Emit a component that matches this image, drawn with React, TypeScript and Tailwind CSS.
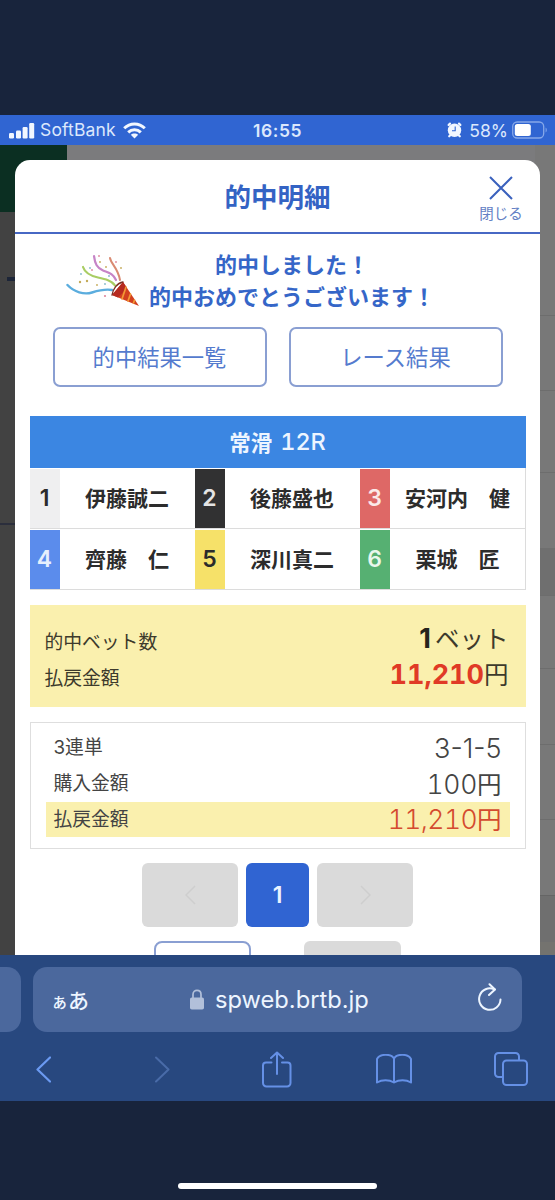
import React from 'react';

const jp = "font-['Noto_Sans_CJK_JP',sans-serif]";
const latin = "font-['Inter','Noto_Sans_CJK_JP',sans-serif]";

const racers = [
  { no: 1, name: '伊藤誠二', color: 'bg-[#efeff0] text-[#2b2b2b]' },
  { no: 2, name: '後藤盛也', color: 'bg-[#313132] text-[#e4e4e4]' },
  { no: 3, name: '安河内　健', color: 'bg-[#de6866] text-[#fbe9e8]' },
  { no: 4, name: '齊藤　仁', color: 'bg-[#5b8cec] text-[#e6effd]' },
  { no: 5, name: '深川真二', color: 'bg-[#f6e169] text-[#2b2b2b]' },
  { no: 6, name: '栗城　匠', color: 'bg-[#56b072] text-[#e9f7ec]' },
];

const StatusBar: React.FC = () => (
  <div className={`${latin} grid h-[30px] shrink-0 grid-cols-[1fr_auto_1fr] items-center bg-[#3065d2] text-[#dce8fc]`}>
    <div className="flex items-center pl-[9px]">
      <svg width="26" height="17" viewBox="0 0 26 17" fill="#f2f7ff">
        <rect x="0" y="11" width="5" height="5.5" rx="1.2" />
        <rect x="7" y="8.5" width="5" height="8" rx="1.2" />
        <rect x="13.6" y="5" width="5" height="11.5" rx="1.2" />
        <rect x="20.2" y="1" width="5" height="15.5" rx="1.2" />
      </svg>
      <span className="ml-[5px] text-[17.5px] leading-none tracking-[0.15px]">SoftBank</span>
      <svg className="ml-[7px]" width="23" height="17" viewBox="0 0 23 17" fill="none" stroke="#f2f7ff" strokeWidth="3">
        <path d="M1.2 6.3C7 .6 16 .6 21.8 6.3" />
        <path d="M5.2 10.4c3.6-3.5 9-3.5 12.6 0" />
        <path d="M11.5 16.5 7.8 12.8c2-1.9 5.4-1.9 7.4 0z" fill="#f2f7ff" stroke="none" />
      </svg>
    </div>
    <span className="pt-px text-[17.5px] font-semibold leading-none tracking-[0.6px]">16:55</span>
    <div className="flex items-center justify-end pr-[7px]">
      <svg width="15" height="16" viewBox="0 0 15 16">
        <circle cx="7.5" cy="8.2" r="6.7" fill="#f2f7ff" />
        <path d="M1.6 3 3 1.6M13.4 3 12 1.6M3 13.5l-.8.8M12 13.5l.8.8" stroke="#f2f7ff" strokeWidth="2.2" strokeLinecap="round" />
        <path d="M8.2 4.6V8.8H5" fill="none" stroke="#3065d2" strokeWidth="1.1" />
      </svg>
      <span className="ml-[7px] pt-px text-[17.5px] leading-none">58%</span>
      <svg className="ml-1" width="36" height="18" viewBox="0 0 36 18">
        <rect x=".7" y="1" width="31" height="16" rx="4.5" fill="none" stroke="#86a8e9" strokeWidth="1.3" />
        <rect x="2.8" y="3" width="16" height="12" rx="2.5" fill="#fff" />
        <path d="M33.5 6.5c2 .8 2 4.2 0 5z" fill="#6f97e6" />
      </svg>
    </div>
  </div>
);

const Cracker: React.FC = () => (
  <svg width="74" height="54" viewBox="0 0 74 54" fill="none" strokeLinecap="round">
    <path d="M1.5 31C8 38 18 41 26 38.5c8-2.5 14-3.5 20-2.5" stroke="#5badde" strokeWidth="2.4" />
    <path d="M17 13c2 6 8 9 15 10.5s14 3 17 8" stroke="#a9cd63" strokeWidth="2.2" />
    <path d="M28 2c1 8 3 12 9 14.5s10 3 13 9.5" stroke="#c684c6" strokeWidth="2.2" />
    <path d="M44 4c1 6 8 10 10 22" stroke="#d98a72" strokeWidth="2" />
    <path d="M57 28 73 52 46 41z" fill="#d2401f" />
    <path d="m57 28 4 6-9 9.5-6-2.500z" fill="#b62a20" />
    <path d="m60 33-4 12M64.5 40l-2.5 7M68.5 46l-1 3" stroke="#f39a36" strokeWidth="1.7" />
    <path d="M46 41c1-6 5-12 11-13" stroke="#7d3026" strokeWidth="1.4" />
    <g fill="#c4ab58">
      <circle cx="14" cy="28" r="1.2" /><circle cx="21" cy="27" r="1.2" />
      <circle cx="34" cy="8" r=".9" /><circle cx="40" cy="13" r=".9" />
      <circle cx="31" cy="31" r=".9" /><circle cx="55" cy="14" r=".9" />
    </g>
    <g fill="#df869c">
      <circle cx="33" cy="2" r=".9" /><circle cx="50" cy="8" r=".9" />
      <circle cx="39" cy="42" r="1.1" /><circle cx="26" cy="16" r=".9" />
    </g>
    <g fill="#82b8c9">
      <circle cx="15" cy="20" r=".9" /><circle cx="24" cy="14" r=".9" />
      <circle cx="43" cy="22" r=".9" /><circle cx="39" cy="30" r=".9" />
    </g>
  </svg>
);

// dimmed page seen around the dialog
const Backdrop: React.FC = () => (
  <div className="flex h-full justify-between bg-[#7b7b7d]">
    <div className="w-[67px]">
      <div className="h-[67px] bg-[#0b2f22]" />
      <div className="h-[743px] w-10 bg-[#424242] pt-[65px]">
        <div className="ml-[7px] h-1 bg-[#1c2538]" />
        <div className="mt-[242px] h-[2px] bg-[#2b2e3c]" />
      </div>
    </div>
    <div className="w-5 bg-[#787878] pt-[170px]">
      <div className="h-[75px] border-t border-[#6d6d6d]" />
      <div className="h-[82px] border-t border-[#6d6d6d]" />
      <div className="h-[76px] border-t border-[#6d6d6d]" />
      <div className="h-[47px] bg-[#6f6f6f]" />
      <div className="h-[73px] border-t border-[#6d6d6d]" />
      <div className="h-[76px] border-t border-[#6d6d6d]" />
      <div className="h-[75px] border-t border-[#6d6d6d]" />
      <div className="h-[76px] border-t border-[#6d6d6d]" />
      <div className="h-[47px] border-t border-[#656565] bg-[#6f6f6f]" />
      <div className="h-[13px] bg-[#74736f]" />
    </div>
  </div>
);

const RaceTable: React.FC = () => (
  <div className="mt-[29px] w-[496px] shrink-0">
    <div className="flex h-[52px] items-center justify-center bg-[#3b86e2] text-[21.5px] font-bold text-[#edf5ff]">
      <span>常滑</span>
      <span className={`${latin} ml-[8px] text-[23.5px] font-medium tabular-nums`}>12R</span>
    </div>
    <div className="grid grid-cols-[165px_165px_166px] border-r border-[#dcdcdc]">
      {racers.map((r) => (
        <div key={r.no} className="flex h-[61px] border-b border-[#dcdcdc] pt-px">
          <div className={`${latin} ${r.color} flex w-[30px] items-center justify-center text-[23px] font-semibold`}>{r.no}</div>
          <div className="flex flex-1 items-center justify-center whitespace-nowrap pb-[2px] text-[21px] font-bold text-[#2c2c2c]">{r.name}</div>
        </div>
      ))}
    </div>
  </div>
);

const Summary: React.FC = () => (
  <div className="mt-[15px] flex h-[102px] w-[496px] shrink-0 flex-col bg-[#faf0ae] pl-[15px] pr-[17px] pt-[16px] text-[#3d3a2c]">
    <div className="flex h-9 shrink-0 items-center justify-between">
      <span className="pt-1 text-[18.8px]">的中ベット数</span>
      <span className="text-[24.5px]"><b className={`${latin} mr-1 text-[27px] font-bold text-[#26241c]`}>1</b>ベット</span>
    </div>
    <div className="flex h-9 shrink-0 items-center justify-between">
      <span className="pt-1 text-[18.8px]">払戻金額</span>
      <span className="text-[24.5px]"><b className={`${latin} text-[27px] font-bold tabular-nums text-[#e03a26]`}>11,210</b>円</span>
    </div>
  </div>
);

const BetDetail: React.FC = () => (
  <div className="mt-[15px] h-[127px] w-[496px] shrink-0 border border-[#dedede] px-[15px] pt-[7px] text-[#444]">
    <div className="flex h-9 items-center justify-between px-2">
      <span className="pb-[2px] text-[18.8px]"><span className={latin}>3</span>連単</span>
      <span className={`${latin} pt-[3px] text-[27px] font-[350]`}>3-1-5</span>
    </div>
    <div className="flex h-9 items-center justify-between px-2">
      <span className="pb-[3px] text-[18.8px]">購入金額</span>
      <span className="pt-[2px] text-[24.5px]"><span className={`${latin} text-[26.5px] font-[350] tracking-[-0.3px] tabular-nums`}>100</span>円</span>
    </div>
    <div className="flex h-[35px] items-center justify-between bg-[#faf0ae] px-2">
      <span className="pb-[3px] text-[18.8px]">払戻金額</span>
      <span className="pt-px text-[24.5px] text-[#d44a2f]"><span className={`${latin} text-[26.5px] font-[350] tracking-[-0.6px] tabular-nums`}>11,210</span>円</span>
    </div>
  </div>
);

const Pager: React.FC = () => (
  <div className="mt-[14px] flex w-full shrink-0 flex-col">
    <div className="flex justify-center gap-2">
      <button className="flex h-16 w-24 items-center justify-center rounded-md bg-[#dadada]">
        <svg width="11" height="20" viewBox="0 0 11 20" fill="none" stroke="#cecece" strokeWidth="1.5"><path d="m10 1-9 9 9 9" /></svg>
      </button>
      <button className={`${latin} h-16 w-[63px] rounded-md bg-[#3064d2] text-[23px] font-semibold text-[#eaf3ff]`}>1</button>
      <button className="flex h-16 w-24 items-center justify-center rounded-md bg-[#dadada]">
        <svg width="11" height="20" viewBox="0 0 11 20" fill="none" stroke="#cecece" strokeWidth="1.5"><path d="m1 1 9 9-9 9" /></svg>
      </button>
    </div>
    <div className="mt-[14px] flex gap-[53px] pl-[139px]">
      <div className="h-16 w-[97px] rounded-lg border-2 border-[#8a9fd2]" />
      <div className="h-16 w-[97px] rounded-md bg-[#dadada]" />
    </div>
  </div>
);

const Dialog: React.FC = () => (
  <div className="absolute left-[15px] top-[15px] flex h-[795px] w-[525px] flex-col items-center overflow-hidden rounded-t-[15px] bg-white">
    <div className="grid h-[74px] w-full shrink-0 grid-cols-[80px_1fr_80px] items-center border-b-2 border-[#4768c4] text-[#3463c4]">
      <span />
      <h1 className="text-center text-[26.5px] font-bold leading-none">的中明細</h1>
      <button className="flex flex-col items-center pl-[2px] pt-[5px]">
        <svg width="24" height="24" viewBox="0 0 24 24" stroke="#3a61bd" strokeWidth="2"><path d="m1 1 22 22M23 1 1 23" /></svg>
        <span className="mt-[6px] text-[14.5px] leading-none text-[#6481c4]">閉じる</span>
      </button>
    </div>
    <div className="flex w-full shrink-0 pl-[51px] pt-[14px] text-[#3566c8]">
      <div className="pt-[6px]"><Cracker /></div>
      <p className="-mt-px mb-px ml-[9px] text-center text-[22px] font-bold leading-8">
        的中しました！<br />的中おめでとうございます！
      </p>
    </div>
    <div className="mt-[15px] flex shrink-0 gap-[22px] text-[22.3px] text-[#557bce]">
      <button className="h-[60px] w-[214px] rounded-[7px] border-2 border-[#8a9fd2]">的中結果一覧</button>
      <button className="h-[60px] w-[214px] rounded-[7px] border-2 border-[#8a9fd2]">レース結果</button>
    </div>
    <RaceTable />
    <Summary />
    <BetDetail />
    <Pager />
  </div>
);

const BrowserBar: React.FC = () => (
  <div className="h-[146px] shrink-0 overflow-hidden bg-[#28487f]">
    <div className="flex gap-3 pt-[12px]">
      <div className="h-[65px] w-[21px] shrink-0 rounded-r-[14px] bg-[#4b689d]" />
      <div className="flex h-[65px] w-[489px] items-center rounded-[14px] bg-[#4b689d] pl-[18px] pr-[20px] text-[#edf5ff]">
        <span className="w-[139px] whitespace-nowrap font-medium leading-none"><span className="text-[17px]">ぁ</span><span className="text-[21px]">あ</span></span>
        <svg width="14" height="21" viewBox="0 0 14 21">
          <path d="M3 9V5.5C3 0 11 0 11 5.5V9" fill="none" stroke="#b2c0da" strokeWidth="1.7" />
          <rect x="0" y="8.5" width="14" height="12" rx="1.8" fill="#b2c0da" />
        </svg>
        <span className={`${latin} ml-[11px] text-[23.7px] leading-none`}>spweb.brtb.jp</span>
        <svg className="-mt-[5px] ml-auto" width="24" height="28" viewBox="0 0 24 28" fill="none" stroke="#edf5ff" strokeWidth="2" strokeLinecap="round" strokeLinejoin="round">
          <path d="M22.5 16.5A10.7 10.7 0 1 1 16.5 6.5" />
          <path d="m11.5 1.2 5.5 5.3-6 5.5" />
        </svg>
      </div>
    </div>
    <div className="grid h-[74px] grid-cols-[86px_153px_76px_158px_76px] items-center justify-items-center">
      <svg width="15" height="27" viewBox="0 0 15 27" fill="none" stroke="#6b9af2" strokeWidth="2.2" strokeLinecap="round" strokeLinejoin="round"><path d="M14 1.5 1.5 13.5 14 25.5" /></svg>
      <svg width="15" height="27" viewBox="0 0 15 27" fill="none" stroke="#496ba8" strokeWidth="2" strokeLinecap="round" strokeLinejoin="round"><path d="m1 1.5 12.5 12L1 25.5" /></svg>
      <svg width="30" height="37" viewBox="0 0 30 37" fill="none" stroke="#6590e6" strokeWidth="2" strokeLinecap="round" strokeLinejoin="round">
        <path d="M9.5 11.5H4a3 3 0 0 0-3 3V32a3.5 3.5 0 0 0 3.5 3.5H25a3.5 3.5 0 0 0 3.500-3.500V14.500a3 3 0 0 0-3-3H20M15 23V1.500M9 7l6-5.500L21 7" />
      </svg>
      <svg width="36" height="30" viewBox="0 0 36 30" fill="none" stroke="#6590e6" strokeWidth="2" strokeLinejoin="round">
        <path d="M18 28.5C13 25.5 6 25.5 1 28.5V5C4-.5 15-.5 18 4.500zM18 28.500c5-3 12-3 17 0V5C32-.5 21-.5 18 4.500z" />
      </svg>
      <svg width="34" height="34" viewBox="0 0 34 34" fill="none" stroke="#6590e6" strokeWidth="2">
        <rect x="9" y="8.5" width="24" height="24.5" rx="3.5" />
        <path d="M9 25H4.5A3.5 3.5 0 0 1 1 21.500v-17A3.500 3.500 0 0 1 4.500 1h17A3.500 3.500 0 0 1 25 4.500v4" />
      </svg>
    </div>
  </div>
);

const App: React.FC = () => {
  return (
    <div className={`${jp} flex h-[1200px] w-[555px] flex-col overflow-hidden bg-[#18243c] pt-[115px]`}>
      <StatusBar />
      <div className="relative h-[810px] shrink-0 overflow-hidden">
        <Backdrop />
        <Dialog />
      </div>
      <BrowserBar />
      <div className="mx-auto mt-[82px] h-[6px] w-[199px] rounded-full bg-white" />
    </div>
  );
};

export default App;
